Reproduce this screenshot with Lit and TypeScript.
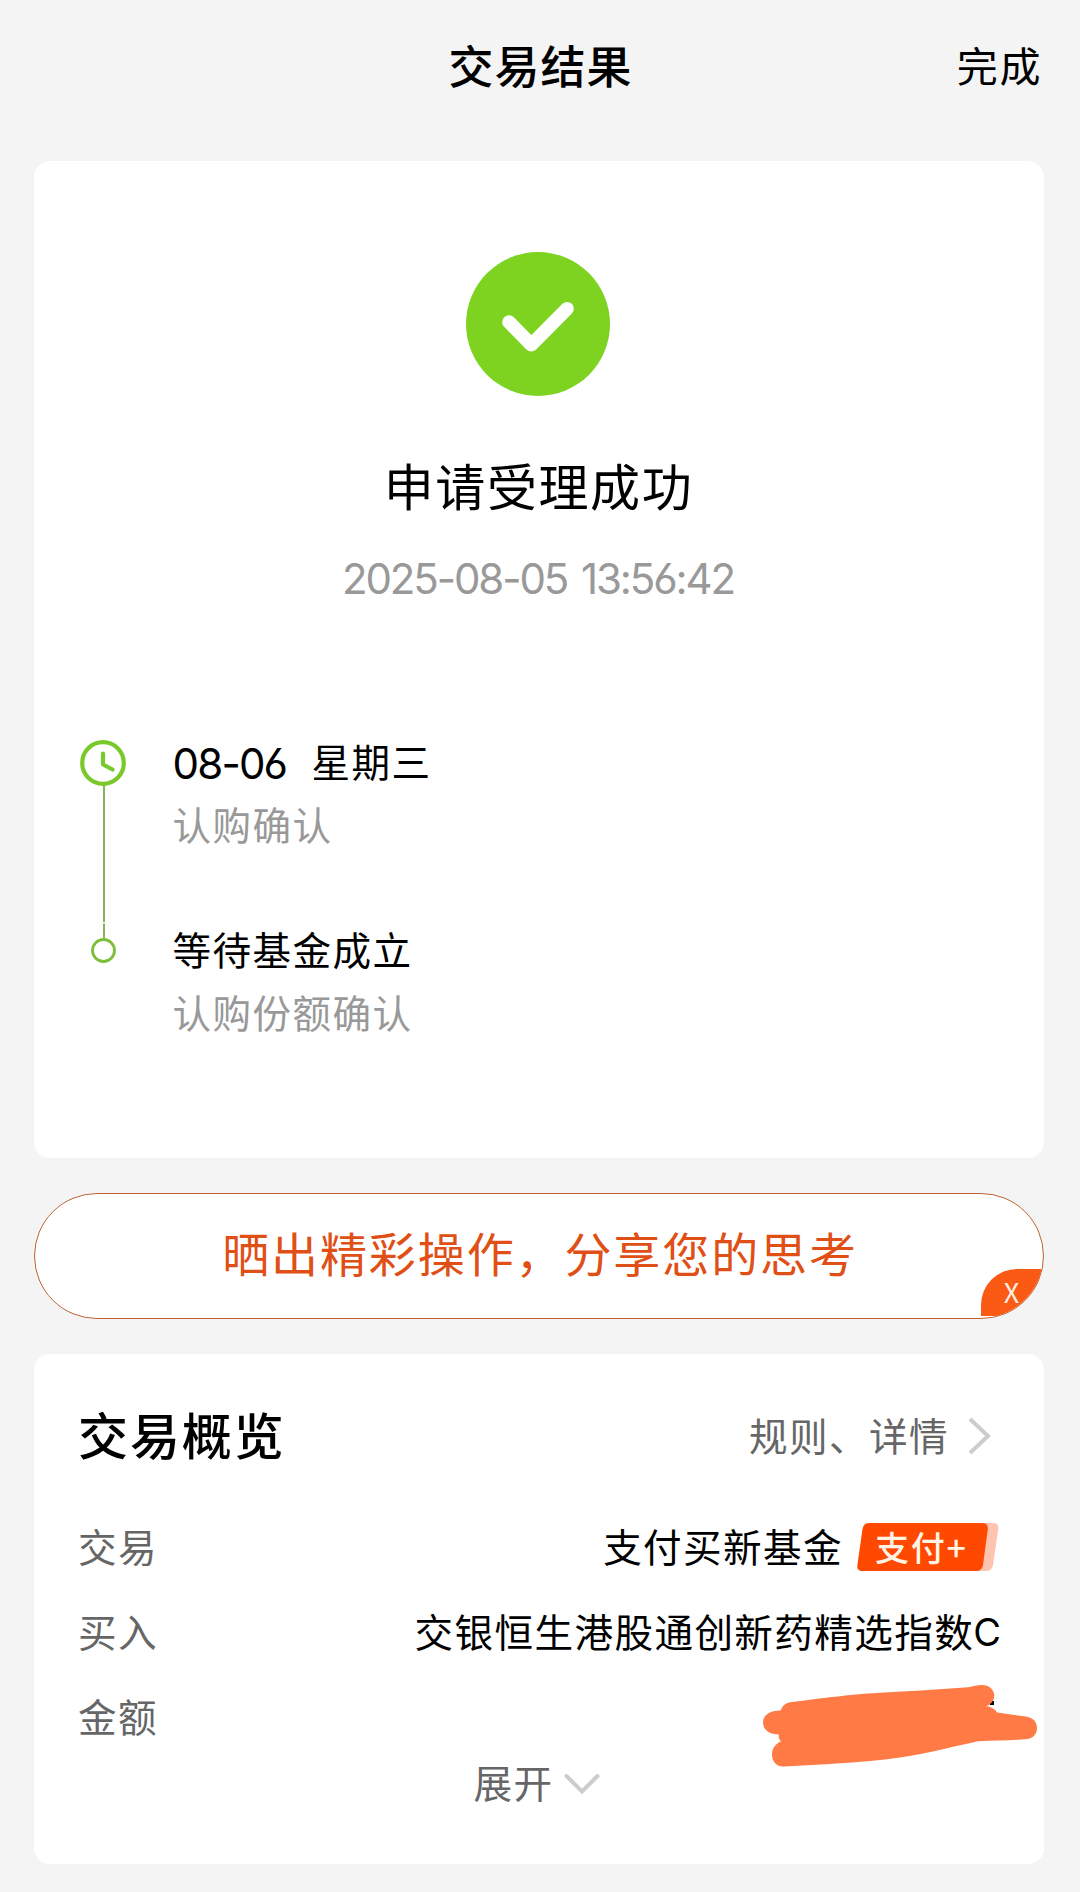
import { LitElement, html, css, svg } from "lit";
import { customElement } from "lit/decorators.js";

interface Step {
  title: unknown;
  note: string;
}

const steps: Step[] = [
  { title: html`<span class="num">08-06</span><span class="day">星期三</span>`, note: "认购确认" },
  { title: "等待基金成立", note: "认购份额确认" },
];

const scribble = svg`
  <path fill="#ff7a45" d="M40.5 50.5 Q43 43.5 50 42.3 C85 38 105 35 140 32.8 C170 31 200 29.5 228 27.3 C238 25 247 23 252 29.5 C257 36 253 44 246 46.3 C252 47 255 49.5 257 52.5 L284 56.3 C293 57 297 62 297 68 C297 75 292 79 285 79.3 C270 80.5 255 80.5 238 81.2 C215 86 190 93 160 97.5 C120 103 80 104.5 44 106.5 C36 107 32 101 32 94.5 C32 88 36 83.5 41 81.5 Q38 78 38.7 74.3 C29 75 23 69 23 62.5 C23 55 30 50.5 40.5 50.5 Z"/>`;

@customElement("app-root")
export class AppRoot extends LitElement {
  static styles = css`
    :host {
      display: block;
      height: 1892px;
      background: #f4f4f4;
      color: #000;
      font-family: "Noto Sans CJK SC", sans-serif;
      font-size: 38.6px;
      letter-spacing: 1.4px;
      line-height: 52px;
      overflow: hidden;
    }
    * { box-sizing: border-box; }
    svg { display: block; flex: none; }
    .page {
      display: flex;
      flex-direction: column;
      padding: 0 36px 0 34px;
    }
    .bar {
      display: grid;
      grid-template-columns: 1fr auto 1fr;
      align-items: center;
      height: 161px;
      padding-bottom: 32px;
    }
    .bar-title {
      grid-column: 2;
      font-size: 45px;
      letter-spacing: 1px;
      font-weight: 500;
      margin-left: 3px;
    }
    .done {
      justify-self: end;
      font-size: 41px;
      letter-spacing: 1.6px;
      margin-right: 2px;
      padding-bottom: 2px;
    }
    .card {
      background: #fff;
      border-radius: 16px;
    }
    .result {
      height: 997px;
      padding: 91px 46px 0 44px;
      display: flex;
      flex-direction: column;
    }
    .tick { align-self: center; }
    .headline {
      margin-top: 52px;
      padding-left: 1px;
      text-align: center;
      font-size: 50px;
      line-height: 72px;
      letter-spacing: 1.6px;
    }
    .num {
      font-family: Inter, "Noto Sans", sans-serif;
      font-feature-settings: "cv03";
      white-space: nowrap;
    }
    .time {
      margin-top: 33px;
      text-align: center;
      color: #999;
      font-size: 42px;
      letter-spacing: -2.1px;
      word-spacing: 4px;
    }
    .timeline {
      margin-top: 134px;
      display: grid;
      grid-template-columns: 50px 1fr;
      column-gap: 44.5px;
    }
    .steps {
      display: flex;
      flex-direction: column;
      gap: 62px;
      margin-top: -10px;
    }
    .step-title, .step-note { height: 63px; line-height: 63px; }
    .step-title { display: flex; }
    .step-title .num {
      width: 113px;
      font-size: 42px;
      letter-spacing: -1.8px;
      padding-top: 3px;
    }
    .day { margin-left: 26px; }
    .step-note { color: #999; }
    .share {
      position: relative;
      overflow: hidden;
      height: 126px;
      margin-top: 35px;
      padding-left: 2px;
      border: 1px solid #c0622f;
      border-radius: 63px;
      background: #fff;
      color: #df4f16;
      font-size: 47px;
      letter-spacing: 1.9px;
      line-height: 116px;
      text-align: center;
    }
    .close {
      position: absolute;
      right: 0;
      bottom: 2px;
      width: 62px;
      height: 47px;
      padding-right: 1px;
      background: #fa5a14;
      border-top-left-radius: 36px;
      color: #fff0e0;
      font-size: 27px;
      line-height: 45px;
      letter-spacing: 0;
    }
    .overview {
      position: relative;
      height: 510px;
      margin-top: 35px;
      padding: 41px 44px 0 44px;
      color: #666;
    }
    .head, .row, .more, .link, .value {
      display: flex;
      align-items: center;
    }
    .head, .row { justify-content: space-between; }
    .head { height: 78px; }
    .head-title {
      color: #000;
      font-size: 50px;
      font-weight: 500;
      letter-spacing: 1.9px;
      padding-bottom: 2px;
    }
    .link { gap: 19px; margin-right: 8px; }
    .link svg { margin-top: 4px; }
    .rows { margin-top: 29px; }
    .row { height: 85px; }
    .value { color: #000; gap: 14px; }
    .latin {
      font-family: Inter, sans-serif;
      font-size: 38px;
      letter-spacing: 0;
      margin-left: -15px;
      margin-right: -1px;
      padding-top: 5px;
    }
    .tag {
      position: relative;
      width: 142px;
      height: 48px;
      color: #fff4e6;
      font-size: 34px;
      font-weight: 500;
      line-height: 47px;
      letter-spacing: 1.7px;
      margin-right: 1px;
      margin-top: 5px;
    }
    .tag-shape { position: absolute; inset: 0; }
    .tag-text { position: relative; padding-left: 18px; }
    .more {
      justify-content: center;
      gap: 11px;
      margin-top: -2px;
      height: 52px;
      margin-right: 4px;
    }
    .more svg { margin-top: 6px; }
    .scribble { position: absolute; left: 706px; top: 306px; }
  `;

  render() {
    return html`
      <main class="page">
        <header class="bar">
          <div class="bar-title">交易结果</div>
          <div class="done">完成</div>
        </header>

        <section class="card result">
          <svg class="tick" width="144" height="144" viewBox="0 0 144 144">
            <circle cx="72" cy="72" r="72" fill="#7ed321" />
            <path d="M43 70 L65.3 92.7 L101 56.7" fill="none" stroke="#fff" stroke-width="13.6"
              stroke-linecap="round" stroke-linejoin="round" />
          </svg>
          <div class="headline">申请受理成功</div>
          <div class="time num">2025-08-05 13:56:42</div>
          <div class="timeline">
            <svg width="50" height="250" viewBox="0 0 50 250">
              <path d="M26 46 V183 M26 184.5 V199" stroke="#84b556" stroke-width="2" />
              <circle cx="25" cy="24" r="20.8" fill="none" stroke="#7ac92b" stroke-width="4.2" />
              <path d="M25 14.5 V25.5 L34.5 30.5" fill="none" stroke="#7ac92b" stroke-width="4.2"
                stroke-linecap="round" stroke-linejoin="round" />
              <circle cx="25.5" cy="211.5" r="11" fill="none" stroke="#7dbd3c" stroke-width="2.8" />
            </svg>
            <div class="steps">
              ${steps.map((s) => html`
                <div>
                  <div class="step-title">${s.title}</div>
                  <div class="step-note">${s.note}</div>
                </div>`)}
            </div>
          </div>
        </section>

        <section class="share">
          晒出精彩操作，分享您的思考
          <div class="close">X</div>
        </section>

        <section class="card overview">
          <div class="head">
            <div class="head-title">交易概览</div>
            <div class="link">
              规则、详情
              <svg width="24" height="38" viewBox="0 0 24 38">
                <path d="M2 2 L20 19 L2 36" fill="none" stroke="#ccc" stroke-width="4" />
              </svg>
            </div>
          </div>
          <div class="rows">
            <div class="row">
              <span>交易</span>
              <div class="value">
                支付买新基金
                <div class="tag">
                  <svg class="tag-shape" width="142" height="48" viewBox="0 0 142 48">
                    <path fill="#ffc4b0" d="M100 0 H136 Q142 0 141.3 6 L136 42 Q135 48 129 48 H100 Z" />
                    <path fill="#ff4800" d="M12 0 H125 Q131.500 0 130.800 6 L126 42 Q125 48 119 48 H5 Q-.5 48 .4 42 L5.500 6 Q6.500 0 12 0 Z" />
                  </svg>
                  <div class="tag-text">支付+</div>
                </div>
              </div>
            </div>
            <div class="row">
              <span>买入</span>
              <div class="value">交银恒生港股通创新药精选指数<span class="latin">C</span></div>
            </div>
            <div class="row"><span>金额</span></div>
          </div>
          <div class="more">
            展开
            <svg width="36" height="24" viewBox="0 0 36 24">
              <path d="M2.500 4 L18 19.500 L33.500 4" fill="none" stroke="#ccc" stroke-width="4"
                stroke-linecap="round" />
            </svg>
          </div>
          <svg class="scribble" width="320" height="120" viewBox="0 0 320 120">
            <rect x="250" y="41" width="4" height="4" fill="#000" />
            ${scribble}
          </svg>
        </section>
      </main>
    `;
  }
}
